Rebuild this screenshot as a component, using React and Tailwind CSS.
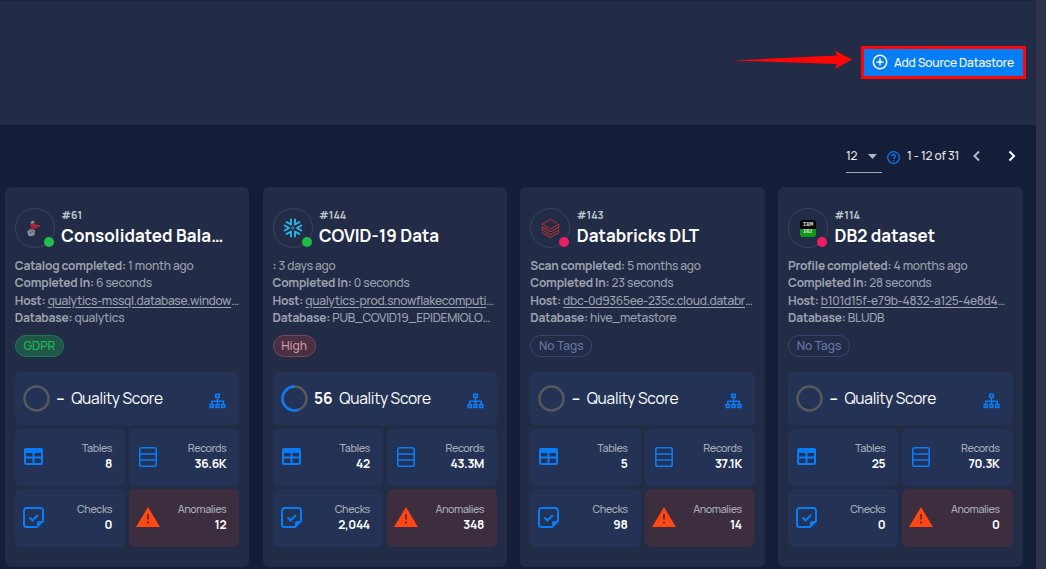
import React from "react";
import { SiDatabricks } from "react-icons/si";

const FONT = "font-['Manrope','Inter','Liberation_Sans',sans-serif]";

const stores = [
  {
    id: "#61", name: "Consolidated Bala…", logo: "mssql", ok: true,
    op: "Catalog completed:", when: "1 month ago", took: "6 seconds",
    host: "qualytics-mssql.database.window", db: "qualytics",
    tag: "GDPR", tagCls: "bg-[#1f5649] border-[#1b7b4c] text-[#1dbb51] w-[49px]",
    score: null, tables: "8", records: "36.6K", checks: "0", anomalies: "12",
  },
  {
    id: "#144", name: "COVID-19 Data", logo: "snow", ok: true,
    op: ":", when: "3 days ago", took: "0 seconds",
    host: "qualytics-prod.snowflakecomputi", db: "PUB_COVID19_EPIDEMIOLO…",
    tag: "High", tagCls: "bg-[#4b3044] border-[#78485a] text-[#cf9ba3] w-[43px]",
    score: 56, tables: "42", records: "43.3M", checks: "2,044", anomalies: "348",
  },
  {
    id: "#143", name: "Databricks DLT", logo: "bricks", ok: false,
    op: "Scan completed:", when: "5 months ago", took: "23 seconds",
    host: "dbc-0d9365ee-235c.cloud.databr", db: "hive_metastore",
    tag: "No Tags", tagCls: "border-[#39466b] text-[#6776ab] w-[62px]",
    score: null, tables: "5", records: "37.1K", checks: "98", anomalies: "14",
  },
  {
    id: "#114", name: "DB2 dataset", logo: "db2", ok: false,
    op: "Profile completed:", when: "4 months ago", took: "28 seconds",
    host: "b101d15f-e79b-4832-a125-4e8d4", db: "BLUDB",
    tag: "No Tags", tagCls: "border-[#39466b] text-[#6776ab] w-[62px]",
    score: null, tables: "25", records: "70.3K", checks: "0", anomalies: "0",
  },
];

function Logo({ kind }) {
  if (kind === "mssql")
    return (
      <svg className="mr-[3px]" width="15" height="18" viewBox="0 0 15 18" fill="none">
        <path d="M4.500 3 7 1.500l1.500 1-.5 3-2.500 1z" fill="#9a8590" />
        <path d="M4 5.500 8 4l6.500 3-4 1.500L7 12l-4-1 2-2.500z" fill="#8e2731" />
        <path d="m5 6.500 9 .5-5 2M7 5l2 4" stroke="#b8323c" strokeWidth=".8" />
        <path d="M1.500 12.500c1-2.500 4-2.500 7.500-1.500l-.5 5c-2 1.500-5 1.500-6.500 0z" fill="#8f96a8" />
        <path d="m3 11.500 4 5m-4-2 5-3M5 10.500l3 4" stroke="#454d66" strokeWidth=".6" />
      </svg>
    );
  if (kind === "snow")
    return (
      <svg width="20" height="20" viewBox="0 0 20 20" fill="none" stroke="#29b5e8" strokeWidth="1.900" strokeLinecap="round" strokeLinejoin="round">
        {[0, 60, 120, 180, 240, 300].map((a) => (
          <path key={a} d="M18.300 7.500 14 10l4.300 2.500" transform={`rotate(${a} 10 10)`} />
        ))}
        <path d="m10 8.700 1.300 1.300-1.300 1.300L8.700 10z" strokeWidth=".9" />
      </svg>
    );
  if (kind === "bricks") return <SiDatabricks size={19} color="#c0322f" />;
  return (
    <div className="flex h-[17px] w-4 flex-col overflow-hidden rounded-[3px] text-center font-['Liberation_Mono',monospace] text-[#d6d6d6]">
      <div className="h-[9px] bg-black text-[6px] font-bold leading-[10px]">IBM</div>
      <div className="h-2 bg-[#0b9a12] text-[5px] font-bold leading-[7px]">DB2</div>
    </div>
  );
}

const Tree = () => (
  <svg width="17" height="16" viewBox="0 0 17 16" fill="none" stroke="#0a7cf5" strokeWidth="1.600">
    <path d="M6.750 1.250h3.500v3h-3.500zM1.250 11.500h3v3h-3zM7 11.500h3v3H7zM12.750 11.500h3v3h-3zM8.500 4.500v7M2.750 11.500V8.250h11.500v3.250" />
  </svg>
);
const Table = () => (
  <svg width="19" height="17" viewBox="0 0 19 17">
    <path fill="#0a7cf5" fillRule="evenodd" d="M2 0h15a2 2 0 0 1 2 2v13a2 2 0 0 1-2 2H2a2 2 0 0 1-2-2V2a2 2 0 0 1 2-2zM2 5v3.500h6.500V5zm8.500 0v3.500H17V5zM2 10.500V15h6.500v-4.500zm8.500 0V15H17v-4.500z" />
  </svg>
);
const Rows = () => (
  <svg width="18" height="20" viewBox="0 0 18 20" fill="none" stroke="#0a7cf5" strokeWidth="1.600">
    <rect x=".8" y=".8" width="16.400" height="18.400" rx="1.800" />
    <path d="M1 7h16M1 13h16" />
  </svg>
);
const Check = () => (
  <svg width="22" height="22" viewBox="0 0 22 22" fill="none" stroke="#0a7cf5" strokeWidth="2" strokeLinejoin="round">
    <path d="M14 20H3.500A2.500 2.500 0 0 1 1 17.500v-14A2.500 2.500 0 0 1 3.500 1h14A2.500 2.500 0 0 1 20 3.500V14z" />
    <path d="M14 20v-4a2 2 0 0 1 2-2h4z" fill="#0a7cf5" stroke="none" />
    <path d="m6.500 10.500 3 3 5.500-5.500" strokeWidth="2.200" strokeLinejoin="miter" />
  </svg>
);
const Warn = () => (
  <svg width="24" height="20" viewBox="0 0 24 20">
    <path d="M12 0 24 20H0z" fill="#ff4713" />
    <path d="M11.200 7h1.600v5.500h-1.600zM11.200 14.500h1.600v2h-1.600z" fill="#3c2d3f" />
  </svg>
);

function Tile({ label, value, icon, cls, textCls }) {
  return (
    <div className={`flex items-start justify-between rounded-md pr-[13px] ${cls}`}>
      {icon}
      <div className={`text-right ${textCls}`}>
        <div className="text-[10.750px] font-medium leading-[17px] tracking-[-0.45px] text-[#a9adb9]">{label}</div>
        <div className="text-[12px] font-bold leading-[13px] tracking-[-0.3px] text-white">{value}</div>
      </div>
    </div>
  );
}

function Card({ s }) {
  return (
    <article className="flex h-[380px] min-w-0 flex-col rounded-md bg-[#232c47] px-[10px] pt-[21px]">
      <div className="flex h-10 gap-[6.500px]">
        <div className="relative flex h-10 w-10 shrink-0 items-center justify-center rounded-full border border-[#39425e]">
          <Logo kind={s.logo} />
          <span className={`absolute right-0 bottom-0 h-[10px] w-[10px] rounded-full ${s.ok ? "bg-[#22bd48]" : "bg-[#ec1d63]"}`} />
        </div>
        <div className="min-w-0 whitespace-nowrap">
          <div className="text-[10.500px] font-bold leading-[15px] text-[#c2c5ce]">{s.id}</div>
          <div className="text-[17px] font-bold leading-[26px] tracking-[0.03px] text-white">{s.name}</div>
        </div>
      </div>
      <div className="mt-[9px] h-[70px] whitespace-nowrap text-[12px] font-medium leading-[17.300px] tracking-[-0.22px] text-[#9da2ae]">
        <div><b>{s.op}</b> {s.when}</div>
        <div><b>Completed In:</b> {s.took}</div>
        <div><b>Host:</b> <span className="tracking-[-0.3px]"><span className="underline underline-offset-2">{s.host}</span>…</span></div>
        <div><b>Database:</b> <span className="tracking-[-0.27px]">{s.db}</span></div>
      </div>
      <div className={`mt-[8px] flex h-[22px] items-center justify-center rounded-full border text-[12px] font-medium ${s.tagCls}`}>{s.tag}</div>
      <div className="mt-[15px] flex h-[53px] items-center rounded-md bg-[#243355] pr-[13px] pl-2 text-white">
        <svg width="27" height="27" viewBox="0 0 27 27" fill="none" strokeWidth="2.500">
          <circle cx="13.500" cy="13.500" r="12" stroke="#57595c" />
          {s.score && <circle cx="13.500" cy="13.500" r="12" stroke="#0a7cf5" pathLength="100" strokeDasharray={`${s.score} 100`} transform="matrix(0 -1 -1 0 27 27)" />}
        </svg>
        <span className="mb-px ml-[6.500px] text-[15.500px] font-bold leading-5">{s.score ?? "–"}</span>
        <span className="mb-px ml-[6.500px] text-[15.500px] leading-5 tracking-[-0.27px]">Quality Score</span>
        <span className="mt-[5px] ml-auto"><Tree /></span>
      </div>
      <div className="mt-1 grid grid-cols-2 grid-rows-[57px_58px] gap-x-1 gap-y-[3px]">
        <Tile cls="bg-[#243355] pl-[9px]" textCls="pt-[11px]" icon={<span className="mt-[19px]"><Table /></span>} label="Tables" value={s.tables} />
        <Tile cls="bg-[#243355] pl-[10px]" textCls="pt-[11px]" icon={<span className="mt-[18px]"><Rows /></span>} label="Records" value={s.records} />
        <Tile cls="bg-[#243355] pl-2" textCls="pt-[12px]" icon={<span className="mt-[18px]"><Check /></span>} label="Checks" value={s.checks} />
        <Tile cls="bg-[#3c2d3f] pl-[7px]" textCls="pt-[12px]" icon={<span className="mt-[18px]"><Warn /></span>} label="Anomalies" value={s.anomalies} />
      </div>
    </article>
  );
}

export default function App() {
  return (
    <div className={`flex h-[569px] w-[1046px] overflow-hidden bg-[#151e39] ${FONT}`}>
      <main className="flex w-[1036px] flex-col">
        <header className="flex h-[125px] items-start justify-end border-t border-[#1b243e] bg-[#232c47] pt-[45px] pr-[10px]">
          <svg className="mt-[4px] mr-[8px]" width="122" height="20" viewBox="0 0 122 20">
            <path d="M0 10.500 106 5.500 104 .5 121 9.500 104 19 106 14z" fill="#ff0505" />
          </svg>
          <button className="flex h-[33px] w-[165px] items-center border-[3px] border-[#ff0505] bg-[#057df5] pl-[8px] text-[12px] font-medium tracking-[-0.17px] text-white">
            <svg className="mr-[6px] mb-px shrink-0" width="16" height="16" viewBox="0 0 16 16" fill="none" stroke="white" strokeWidth="1.500">
              <circle cx="8" cy="8" r="6.700" />
              <path d="M8 4.500v7M4.500 8h7" />
            </svg>
            <span className="whitespace-nowrap">Add Source Datastore</span>
          </button>
        </header>
        <div className="flex h-[62px] items-start pt-[18px] pl-[846px] text-[12px] font-medium text-[#e6e8ee]">
          <div className="flex h-[30px] w-9 items-start justify-between border-b border-[#a7abb8] pr-[5px] leading-[26px]">
            <span className="tracking-[-0.3px]">12</span>
            <svg className="mt-[11px]" width="9" height="5" viewBox="0 0 9 5"><path d="M0 0h9L4.500 5z" fill="#b3b7c2" /></svg>
          </div>
          <svg className="mt-[8px] ml-[5px]" width="13" height="13" viewBox="0 0 13 13" fill="none" stroke="#0a7cf5" strokeWidth="1.300">
            <circle cx="6.500" cy="6.500" r="5.800" />
            <path d="M4.700 5.300c0-2.500 3.700-2.300 3.700 0 0 1.300-1.900 1.400-1.900 2.700M6.500 9v1.200" />
          </svg>
          <span className="ml-[7px] w-[52px] whitespace-nowrap leading-[26px] tracking-[-0.2px]">1 - 12 of 31</span>
          <svg className="mt-[7px] ml-[13px]" width="8" height="12" viewBox="0 0 8 12" fill="none" stroke="#b6bac5" strokeWidth="2"><path d="m7 1.500-4.500 4.500 4.500 4.500" /></svg>
          <svg className="mt-[7px] ml-[28px]" width="8" height="12" viewBox="0 0 8 12" fill="none" stroke="#ffffff" strokeWidth="2"><path d="m1.500 1.500 4.500 4.500-4.500 4.500" /></svg>
        </div>
        <section className="grid w-[1022.600px] grid-cols-4 gap-x-[13.200px] pl-[4.800px]">
          {stores.map((s) => <Card key={s.id} s={s} />)}
        </section>
      </main>
      <aside className="w-[10px] bg-[#2e3349]" />
    </div>
  );
}
